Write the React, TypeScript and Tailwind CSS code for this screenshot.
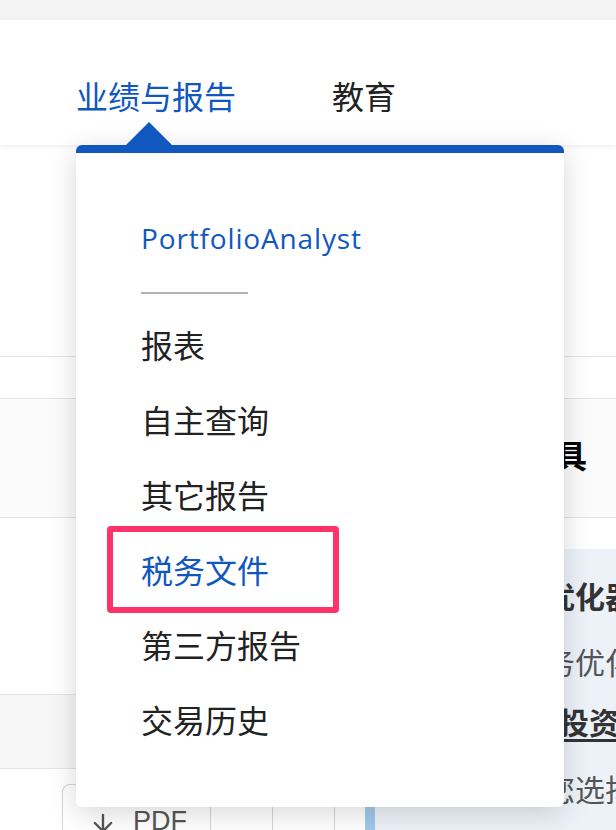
import { ArrowDown } from "lucide-react";

const menuItems = ["报表", "自主查询", "其它报告", "税务文件", "第三方报告", "交易历史"];

function NavBar() {
  return (
    <>
      <div className="h-[20px] bg-[#f3f3f3]" />
      <header className="h-[125px] bg-white shadow-[0_2px_4px_rgba(0,0,0,0.06)] relative z-10">
        <nav className="flex gap-[96px] pl-[76px] pt-[53px] text-[32px] leading-[48px]">
          <span className="text-[#1157c0]">业绩与报告</span>
          <span className="text-[#222]">教育</span>
        </nav>
      </header>
    </>
  );
}

function ReportsMenu() {
  return (
    <div className="absolute left-[76px] top-[145px] z-20 w-[488px] h-[662px] bg-white rounded-[6px] border-t-[8px] border-[#1157c0] shadow-[0_6px_28px_rgba(0,0,0,0.16)]">
      <svg
        className="absolute left-[50px] top-[-31px]"
        width="46"
        height="23"
        viewBox="0 0 46 23"
      >
        <polygon points="23,0 46,23 0,23" fill="#1157c0" />
      </svg>
      <div className="pl-[65px] pt-[60px]">
        <div className="h-[50px] flex items-center font-['Open_Sans',sans-serif] text-[28px] text-[#1157c0] tracking-[0.85px]">
          PortfolioAnalyst
        </div>
        <div className="mt-[29px] w-[107px] h-[2px] bg-[#b3b3b3]" />
        <ul className="mt-[14px]">
          {menuItems.map((item) => (
            <li
              key={item}
              className={`relative h-[75px] flex items-center text-[32px] ${
                item === "税务文件" ? "text-[#1157c0]" : "text-[#222]"
              }`}
            >
              {item === "税务文件" && (
                <span className="absolute left-[-34px] top-[-7px] w-[232px] h-[87px] border-[6px] border-[#ff3369] rounded-[4px]" />
              )}
              {item}
            </li>
          ))}
        </ul>
      </div>
    </div>
  );
}

function PageBehind() {
  return (
    <div>
      <div className="h-[212px] border-b border-[#e3e3e3]" />
      <div className="h-[42px] border-b border-[#e3e3e3]" />
      <div className="h-[119px] border-b border-[#e3e3e3] bg-[#fbfbfb] pl-[395px] pt-[33px]">
        <h2 className="text-[32px] leading-[48px] font-bold text-black">税务规划工具</h2>
      </div>
      <div className="grid grid-cols-[365px_1fr]">
        <div>
          <div className="h-[177px] border-b border-[#e3e3e3]" />
          <div className="h-[74px] border-b border-[#e3e3e3] bg-[#f6f6f6]" />
          <div className="pt-[15px] pl-[62px]">
            <div className="flex h-[60px] border border-b-0 border-[#d6d6d6] rounded-tl-[8px] w-[273px]">
              <div className="w-[148px] border-r border-[#d6d6d6] flex items-start gap-[16px] pl-[26px] pt-[20px] text-[#555]">
                <ArrowDown size={28} strokeWidth={2} className="mt-[4px]" />
                <span className="font-['Liberation_Sans',sans-serif] text-[27px] leading-[32px]">PDF</span>
              </div>
              <div className="w-[63px] border-r border-[#d6d6d6]" />
              <div className="w-[61px]" />
            </div>
          </div>
        </div>
        <div className="pt-[31px]">
          <div className="h-[282px] bg-[#edf2f9] border-l-[10px] border-[#a3c8e9] pl-[20px] pt-[28px] text-[30px] leading-[40px] whitespace-nowrap overflow-hidden">
            <p className="font-bold text-[#333]">全新的税务优化器</p>
            <p className="mt-[26px] text-[#555]">利用我们税务优化器管理</p>
            <p className="mt-[20px] pl-[14px] font-bold text-[#333]">
              进一步了解<span className="underline underline-offset-[5px]">投资组合</span>
            </p>
            <p className="mt-[27px] text-[#555]">您可以根据您选择的方法</p>
          </div>
        </div>
      </div>
    </div>
  );
}

export default function App() {
  return (
    <div className="relative w-[616px] h-[830px] overflow-hidden bg-white font-['Noto_Sans','Noto_Sans_CJK_SC',sans-serif]">
      <NavBar />
      <PageBehind />
      <ReportsMenu />
    </div>
  );
}
